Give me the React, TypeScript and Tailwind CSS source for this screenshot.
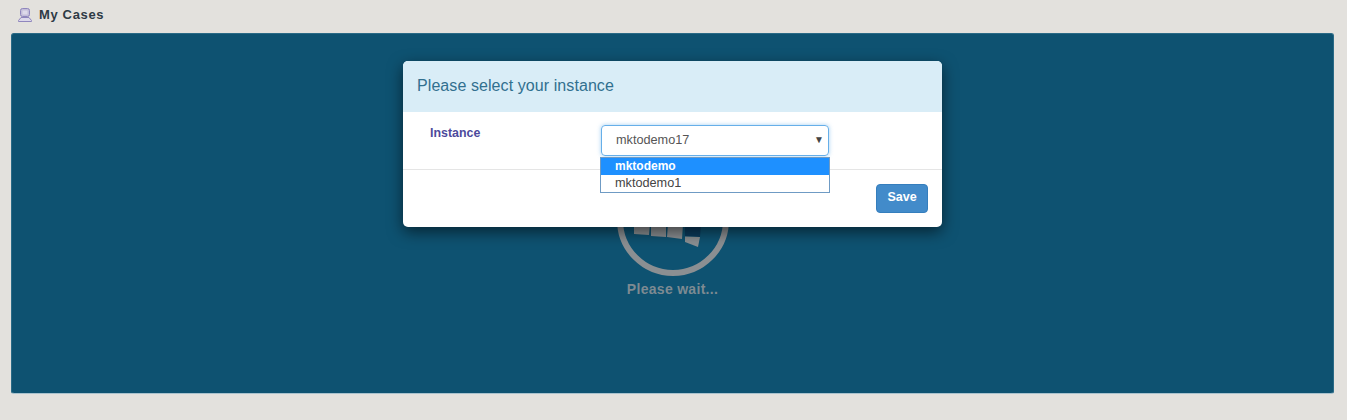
export default function App() {
  return (
    <div className="h-[420px] overflow-hidden bg-[#e3e1dd] font-['Liberation_Sans',Arial,sans-serif]">
      <header className="flex h-[33px] items-center pb-[4px] pl-[17px]">
        <svg width="16" height="16" viewBox="0 0 16 16" fill="none" className="mr-[6px]">
          <rect x="3.5" y="1.5" width="9" height="8" rx="2" fill="#c3bdd9" stroke="#8f86bd" />
          <rect x="5.5" y="3.5" width="5" height="4" fill="#ddd9ea" />
          <path d="M4 10.5h8l2.5 3v1h-13v-1z" fill="#dcd8ea" stroke="#8f86bd" />
        </svg>
        <span className="text-[13px] font-bold tracking-[0.65px] text-[#2e3a45]">My Cases</span>
      </header>
      <main className="relative ml-[11px] mr-[13px] h-[361px] rounded-[3px] border border-[#2a6a86] border-b-[#a9c2cd] bg-[#0e5271]">
        <div className="flex flex-col items-center pt-[130px]">
          <svg width="114" height="114" viewBox="0 0 114 114" fill="none">
            <circle cx="57" cy="56" r="53" stroke="#8b8f92" strokeWidth="6" />
            <path d="M18 60h16l-1 11-15-1z M35 60h15v13l-15-1z M52 60h15l-1 15-15-2z" fill="#8b8f92" />
            <path d="M69 60h16l-1 13-15-1z" fill="#0b3a5c" />
            <path d="M69 72.5l15 .5-2 10-13-5z" fill="#8b8f92" />
          </svg>
          <p className="mt-[1px] text-[14px] font-bold tracking-[0.3px] text-[#7d8a92]">Please wait...</p>
        </div>
        <section className="absolute left-[391px] top-[27px] w-[539px] rounded-[5px] bg-white shadow-[0_5px_15px_rgba(0,0,0,0.55)]">
          <div className="flex h-[51px] items-center rounded-t-[5px] bg-[#d9edf7] pb-[2px] pl-[14px] text-[16px] tracking-[0.08px] text-[#31708f]">
            Please select your instance
          </div>
          <div className="relative flex h-[58px] border-b border-[#e5e5e5] pl-[27px] pt-[13px]">
            <label className="w-[171px] text-[12.4px] leading-[16px] font-bold text-[#4d4a9c]">Instance</label>
            <div className="relative h-[31px] w-[228px]">
              <div className="flex h-[31px] items-center justify-between rounded-[4px] border border-[#66afe9] pl-[14px] pr-[4px] text-[12.7px] text-[#555555] shadow-[0_0_4px_rgba(102,175,233,0.6)]">
                <span>mktodemo17</span>
                <span className="pb-[2px] text-[10px] text-[#444444]">▼</span>
              </div>
              <ul className="absolute left-[-1px] top-[32px] z-10 w-[230px] border border-[#6f9bc4] bg-white text-[12.7px] leading-[17px] text-[#444444]">
                <li className="bg-[#1e90ff] pl-[14px] text-[12px] font-bold text-white">mktodemo</li>
                <li className="pl-[14px]">mktodemo1</li>
              </ul>
            </div>
          </div>
          <div className="flex h-[57px] items-start justify-end pr-[14px] pt-[14px]">
            <button className="h-[29px] w-[52px] rounded-[4px] border border-[#357ebd] bg-[#428bca] pb-[2px] text-[12.5px] font-bold text-white">
              Save
            </button>
          </div>
        </section>
      </main>
    </div>
  );
}
